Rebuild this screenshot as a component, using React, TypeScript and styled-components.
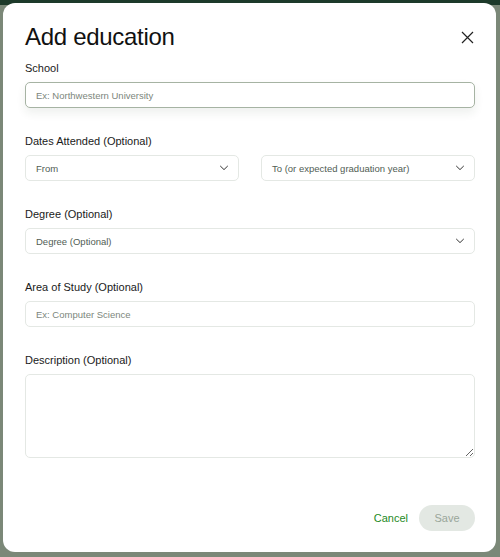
import React from "react";
import styled, { createGlobalStyle } from "styled-components";

const Global = createGlobalStyle`
  html, body { margin: 0; padding: 0; }
  body { font-family: "Liberation Sans", Arial, sans-serif; }
  * { box-sizing: border-box; }
`;

const Backdrop = styled.div`
  width: 500px;
  height: 557px;
  padding: 3px 4px 5px 3px;
  background: linear-gradient(#1d3a2a 0 5px, #7b8878 5px);
`;

const Modal = styled.div`
  height: 549px;
  background: #fff;
  border-radius: 12px;
  padding: 18px 21px 21px 22px;
  display: flex;
  flex-direction: column;
`;

const Header = styled.div`
  display: flex;
  align-items: center;
  justify-content: space-between;
  height: 32px;
`;

const Title = styled.h1`
  margin: 0;
  font-size: 24px;
  font-weight: 400;
  letter-spacing: -0.3px;
  color: #111;
`;

const CloseButton = styled.button`
  border: 0;
  background: none;
  padding: 0;
  width: 14px;
  height: 14px;
  margin-right: 1px;
  display: flex;
  align-items: center;
  justify-content: center;
  cursor: pointer;
`;

const Field = styled.div<{ $top: number }>`
  display: flex;
  flex-direction: column;
  gap: 6px;
  margin-top: ${(p) => p.$top}px;
`;

const Label = styled.label`
  font-size: 11px;
  line-height: 16px;
  color: #1a1a1a;
`;

const TextInput = styled.input<{ $focused?: boolean }>`
  height: 26px;
  width: 100%;
  border: 1px solid ${(p) => (p.$focused ? "#a6b3a3" : "#e4e8e4")};
  border-radius: 5px;
  padding: 0 10px;
  font-family: inherit;
  font-size: 9.5px;
  color: #333;
  outline: none;
  box-shadow: ${(p) => (p.$focused ? "0 5px 10px rgba(40,60,40,0.08)" : "none")};
  &::placeholder { color: #7c867c; }
`;

const Row = styled.div`
  display: grid;
  grid-template-columns: 1fr 1fr;
  gap: 22px;
`;

const Select = styled.div`
  height: 26px;
  border: 1px solid #e4e8e4;
  border-radius: 5px;
  padding: 0 9px 0 10px;
  display: flex;
  align-items: center;
  justify-content: space-between;
  font-size: 9.5px;
  color: #515d54;
`;

const TextArea = styled.textarea`
  height: 84px;
  width: 100%;
  border: 1px solid #e4e8e4;
  border-radius: 5px;
  padding: 8px 10px;
  font-family: inherit;
  font-size: 10px;
  outline: none;
  resize: vertical;
`;

const Footer = styled.div`
  margin-top: auto;
  display: flex;
  justify-content: flex-end;
  align-items: center;
  gap: 11px;
`;

const TextButton = styled.button`
  border: 0;
  background: none;
  font-family: inherit;
  font-size: 11px;
  color: #1e8a1e;
  padding: 0;
  cursor: pointer;
`;

const PrimaryButton = styled.button`
  width: 56px;
  height: 26px;
  border: 0;
  border-radius: 13px;
  background: #e3e8e3;
  color: #9aa69a;
  font-family: inherit;
  font-size: 11px;
`;

const Chevron = () => (
  <svg width="10" height="6" viewBox="0 0 10 6" fill="none">
    <path d="M1.5 1.2l3.5 3.4 3.5-3.4" stroke="#333" strokeWidth="1" strokeLinecap="round" strokeLinejoin="round" />
  </svg>
);

export default function App() {
  return (
    <>
      <Global />
      <Backdrop>
        <Modal>
          <Header>
            <Title>Add education</Title>
            <CloseButton aria-label="Close">
              <svg width="13" height="13" viewBox="0 0 13 13">
                <path d="M1 1l11 11M12 1L1 12" stroke="#222" strokeWidth="1.2" />
              </svg>
            </CloseButton>
          </Header>
          <Field $top={7}>
            <Label>School</Label>
            <TextInput $focused placeholder="Ex: Northwestern University" />
          </Field>
          <Field $top={25}>
            <Label>Dates Attended (Optional)</Label>
            <Row>
              <Select>
                <span>From</span>
                <Chevron />
              </Select>
              <Select>
                <span>To (or expected graduation year)</span>
                <Chevron />
              </Select>
            </Row>
          </Field>
          <Field $top={25}>
            <Label>Degree (Optional)</Label>
            <Select>
              <span>Degree (Optional)</span>
              <Chevron />
            </Select>
          </Field>
          <Field $top={25}>
            <Label>Area of Study (Optional)</Label>
            <TextInput placeholder="Ex: Computer Science" />
          </Field>
          <Field $top={25}>
            <Label>Description (Optional)</Label>
            <TextArea />
          </Field>
          <Footer>
            <TextButton>Cancel</TextButton>
            <PrimaryButton>Save</PrimaryButton>
          </Footer>
        </Modal>
      </Backdrop>
    </>
  );
}
